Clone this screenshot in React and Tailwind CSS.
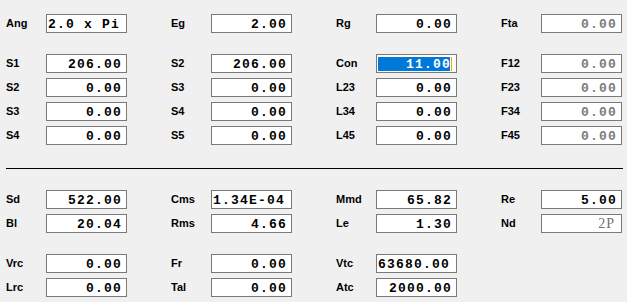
import React from 'react'

const rowsTop = [
  [
    { label: 'Ang', value: '2.0 x Pi', align: 'left' },
    { label: 'Eg', value: '2.00' },
    { label: 'Rg', value: '0.00' },
    { label: 'Fta', value: '0.00', disabled: true },
  ],
]

const rowsS = [
  [
    { label: 'S1', value: '206.00' },
    { label: 'S2', value: '206.00' },
    { label: 'Con', value: '11.00', selected: true },
    { label: 'F12', value: '0.00', disabled: true },
  ],
  [
    { label: 'S2', value: '0.00' },
    { label: 'S3', value: '0.00' },
    { label: 'L23', value: '0.00' },
    { label: 'F23', value: '0.00', disabled: true },
  ],
  [
    { label: 'S3', value: '0.00' },
    { label: 'S4', value: '0.00' },
    { label: 'L34', value: '0.00' },
    { label: 'F34', value: '0.00', disabled: true },
  ],
  [
    { label: 'S4', value: '0.00' },
    { label: 'S5', value: '0.00' },
    { label: 'L45', value: '0.00' },
    { label: 'F45', value: '0.00', disabled: true },
  ],
]

const rowsMech = [
  [
    { label: 'Sd', value: '522.00' },
    { label: 'Cms', value: '1.34E-04', align: 'left' },
    { label: 'Mmd', value: '65.82' },
    { label: 'Re', value: '5.00' },
  ],
  [
    { label: 'Bl', value: '20.04' },
    { label: 'Rms', value: '4.66' },
    { label: 'Le', value: '1.30' },
    { label: 'Nd', value: '2P', serif: true },
  ],
]

const rowsBox = [
  [
    { label: 'Vrc', value: '0.00' },
    { label: 'Fr', value: '0.00' },
    { label: 'Vtc', value: '63680.00', align: 'left' },
  ],
  [
    { label: 'Lrc', value: '0.00' },
    { label: 'Tal', value: '0.00' },
    { label: 'Atc', value: '2000.00' },
  ],
]

function Field({ label, value, align, disabled, selected, serif }) {
  let text
  if (selected) {
    text = (
      <div className="flex items-center h-[14px] w-full ml-[1px] mr-[6px] bg-[#0078d7] justify-end">
        <span className="text-white font-bold tracking-[1.2px] font-['Liberation_Mono',monospace] text-[13px] leading-none">{value}</span>
        <span className="w-[1px] h-[14px] bg-[#f0a020] -mr-[2px]" />
      </div>
    )
  } else if (serif) {
    text = (
      <span className="w-full text-right pr-[6px] text-[#707070] font-['Liberation_Serif',serif] text-[14px] tracking-[1px] leading-none">{value}</span>
    )
  } else {
    text = (
      <span
        className={`w-full leading-none font-bold tracking-[1.2px] font-['Liberation_Mono',monospace] text-[13px] whitespace-nowrap ${
          align === 'left' ? 'text-left pl-[1px]' : 'text-right pr-[4px]'
        } ${disabled ? 'text-[#7a7a7a]' : 'text-black'}`}
      >
        {value}
      </span>
    )
  }
  return (
    <div className="flex items-center w-[165px] shrink-0">
      <span className="w-10 text-[11px] font-bold font-['Liberation_Sans',Arial,sans-serif] text-black leading-none">{label}</span>
      <div className="w-[81px] h-[19px] border border-[#7a7a7a] bg-white flex items-center overflow-hidden pt-[1px]">{text}</div>
    </div>
  )
}

function Row({ fields }) {
  return (
    <div className="flex h-[19px]">
      {fields.map((f, i) => (
        <Field key={i} {...f} />
      ))}
    </div>
  )
}

export default function App() {
  return (
    <div className="w-[627px] h-[302px] bg-[#f0f0f0] pl-[6px] pr-[4px] pt-[14px] overflow-hidden">
      <div className="flex flex-col gap-[5px]">
        {rowsTop.map((r, i) => <Row key={i} fields={r} />)}
      </div>
      <div className="flex flex-col gap-[5px] mt-[21px]">
        {rowsS.map((r, i) => <Row key={i} fields={r} />)}
      </div>
      <div className="h-[1px] bg-black mt-[23px]" />
      <div className="flex flex-col gap-[5px] mt-[21px]">
        {rowsMech.map((r, i) => <Row key={i} fields={r} />)}
      </div>
      <div className="flex flex-col gap-[5px] mt-[21px]">
        {rowsBox.map((r, i) => <Row key={i} fields={r} />)}
      </div>
    </div>
  )
}
